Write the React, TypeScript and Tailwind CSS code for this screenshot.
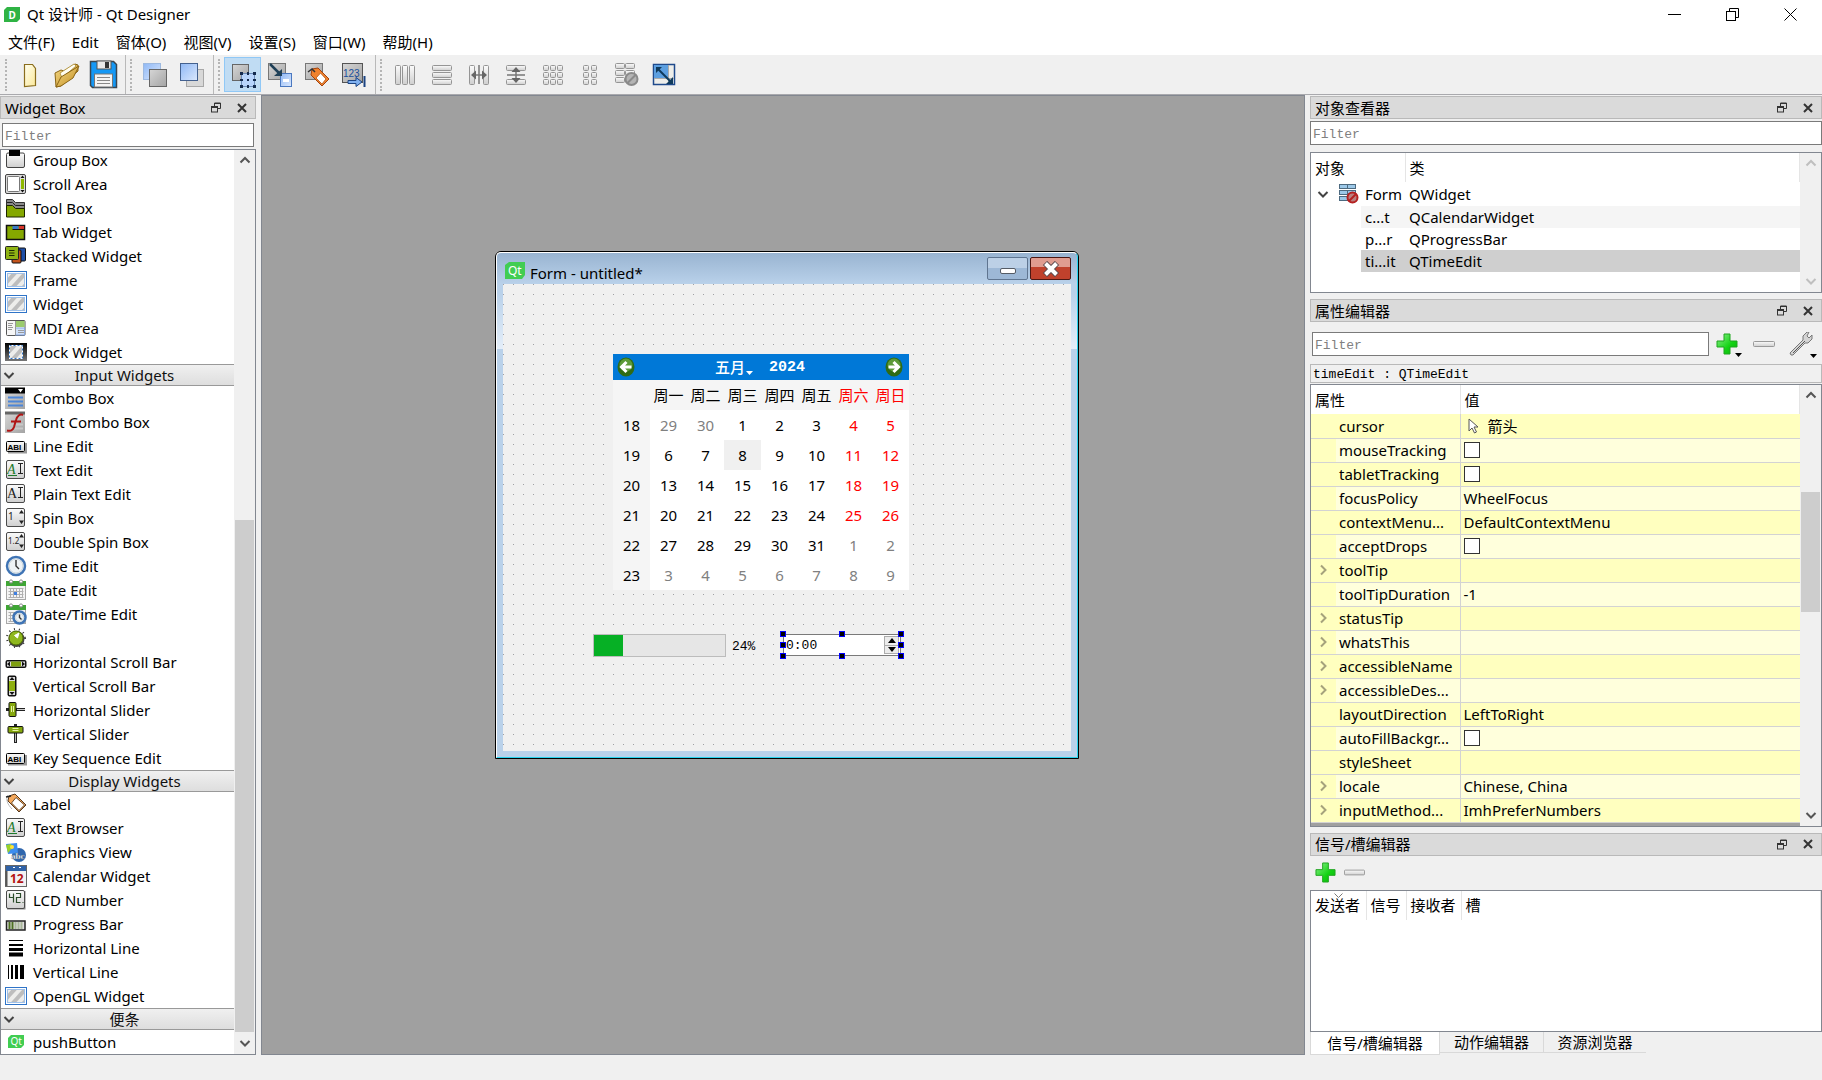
import type { ReactNode } from 'react';
import clsx from 'clsx';

const MONO = "font-['Liberation_Mono','Noto_Sans_CJK_SC',monospace] text-[13px]";

const menus = ['文件(F)', 'Edit', '窗体(O)', '视图(V)', '设置(S)', '窗口(W)', '帮助(H)'];

function Svg({ size = 22, children }: { size?: number; children: ReactNode }) {
  return (
    <svg width={size} height={size} viewBox={`0 0 ${size} ${size}`} className="shrink-0" aria-hidden="true">
      {children}
    </svg>
  );
}

/* shared gradients, referenced by id from every icon */
function Defs() {
  return (
    <svg width="0" height="0" className="absolute" aria-hidden="true">
      <defs>
        <linearGradient id="grey" x1="0" y1="0" x2="1" y2="1">
          <stop offset="0" stopColor="#d6d6d6" />
          <stop offset="1" stopColor="#a4a4a4" />
        </linearGradient>
        <linearGradient id="light" x1="0" y1="0" x2="0" y2="1">
          <stop offset="0" stopColor="#fbfbfb" />
          <stop offset="1" stopColor="#cfcfcf" />
        </linearGradient>
        <linearGradient id="blue" x1="0" y1="0" x2="1" y2="1">
          <stop offset="0" stopColor="#8fb8f5" />
          <stop offset="1" stopColor="#dbe8fd" />
        </linearGradient>
        <linearGradient id="green" x1="0" y1="0" x2="1" y2="1">
          <stop offset="0" stopColor="#8ef08e" />
          <stop offset="0.6" stopColor="#13d313" />
          <stop offset="1" stopColor="#0fae0f" />
        </linearGradient>
        <linearGradient id="paper" x1="0" y1="0" x2="1" y2="1">
          <stop offset="0" stopColor="#fffef0" />
          <stop offset="1" stopColor="#fbe99a" />
        </linearGradient>
        <linearGradient id="folder" x1="0" y1="0" x2="1" y2="1">
          <stop offset="0" stopColor="#f7dd8a" />
          <stop offset="1" stopColor="#c08a1c" />
        </linearGradient>
        <linearGradient id="dark" x1="0" y1="0" x2="0" y2="1">
          <stop offset="0" stopColor="#000" />
          <stop offset="1" stopColor="#777" />
        </linearGradient>
        <pattern id="stripes" width="8" height="8" patternUnits="userSpaceOnUse" patternTransform="rotate(42)">
          <rect width="8" height="8" fill="#ededeb" />
          <rect width="4" height="8" fill="#bdbdbd" />
        </pattern>
      </defs>
    </svg>
  );
}

const tile = <rect x="1.5" y="1.5" width="18" height="18" rx="1.5" fill="url(#light)" stroke="#4a4a4a" />;

const calendarBase = (
  <>
    <rect x="1.5" y="3.5" width="19" height="17" fill="#f4f4f4" stroke="#a8a8a8" />
    <rect x="1" y="2" width="20" height="5" fill="#3fa535" />
    <circle cx="6" cy="2.5" r="1.6" fill="#fff" stroke="#8a8a8a" />
    <circle cx="16" cy="2.5" r="1.6" fill="#fff" stroke="#8a8a8a" />
    <path d="M3.5 9.5h15M3.5 12.5h15M3.5 15.5h15M3.5 18.5h15M5.5 9v10M8.5 9v10M11.5 9v10M14.5 9v10M17.5 9v10" stroke="#b0b0b0" />
  </>
);

const lineEdit = (
  <>
    <path d="M3 17.5h18V8" fill="none" stroke="#999" strokeWidth="2" />
    <rect x="1.5" y="6.5" width="18" height="10" rx="1" fill="url(#light)" stroke="#000" />
    <text x="2.5" y="14.5" fontSize="8" fontWeight="bold" fontFamily="Liberation Sans" fill="#000">ABI</text>
  </>
);

const textEdit = (color: string, italic: boolean) => (
  <>
    {tile}
    <text x="2" y="15" fontSize="14" fontFamily="Liberation Serif" fontStyle={italic ? 'italic' : 'normal'} fill={color}>A</text>
    {italic && <path d="M3 16.5h9" stroke={color} />}
    <path d="M13 4.5h5M13 14.5h5M15.5 5v9" stroke="#222" />
  </>
);

const clock = (cx: number, cy: number, r: number) => (
  <>
    <circle cx={cx} cy={cy} r={r} fill="#eef3f6" stroke="#3f74b5" strokeWidth="2.5" />
    <circle cx={cx} cy={cy} r={r - 2} fill="none" stroke="#c9d4da" />
    <path d={`M${cx} ${cy - r + 3}V${cy}l${r / 3} ${r / 3}`} fill="none" stroke="#333" strokeWidth="1.4" />
  </>
);

const stripes = (
  <>
    <rect x="0.5" y="2.5" width="21" height="17" fill="#fff" stroke="#2f74c8" />
    <rect x="2.5" y="4.5" width="17" height="13" fill="url(#stripes)" stroke="#9fc0e8" />
  </>
);

const spin = (label: string) => (
  <>
    {tile}
    <text x="3" y="13" fontSize={label.length > 1 ? 8 : 10} fontFamily="Noto Sans" fill="#222">{label}</text>
    <path d="M16.5 3l2.500 3.500h-5zM16.500 17l2.500-3.500h-5z" fill="#222" />
  </>
);

const tag = (
  <>
    <path d="M3 2c-3 4 0 10 4 14" fill="none" stroke="#bbb" />
    <path d="M4 3l6-2 11 11-7 7L3 8z" fill="#f6a95c" stroke="#5a3a1c" />
    <path d="M11 4.500l8.500 7.500-5.500 5.500L6.500 10z" fill="#fff" stroke="#6b4a2a" />
    <path d="M1 4l5-1" stroke="#222" strokeWidth="1.5" />
  </>
);

const qt = (
  <>
    <path d="M6 4h13v10l-3 3H3V7z" fill="#41cd52" />
    <text x="5.5" y="14" fontSize="10" fontFamily="Noto Sans" fill="#fff">Qt</text>
  </>
);

const widgetIcons: Record<string, ReactNode> = {
  'Group Box': (
    <>
      <rect x="1.5" y="4" width="18" height="14.5" rx="1.5" fill="url(#light)" stroke="#444" />
      <rect x="4" y="1" width="11" height="6" fill="#000" />
    </>
  ),
  'Scroll Area': (
    <>
      <rect x="0.5" y="1.5" width="20" height="19" rx="1.5" fill="#ddd" stroke="#444" />
      <rect x="2.5" y="3.5" width="12" height="15" rx="1" fill="#fff" stroke="#777" />
      <path d="M17.5 2.500l2 2.500h-4zM17.500 19.500l2-2.500h-4z" fill="#111" />
      <rect x="16" y="6" width="3" height="10" fill="#8fb800" />
    </>
  ),
  'Tool Box': (
    <>
      <path d="M1.5 2.500h6l3 3h9v14h-18z" fill="#8a8a8a" stroke="#333" />
      <path d="M2 5.500h5.500l3 3h9" fill="none" stroke="#222" />
      <path d="M1.5 8.500h6l3 3h9v8.500h-18z" fill="#85a800" stroke="#1d2600" />
    </>
  ),
  'Tab Widget': (
    <>
      <rect x="1.5" y="4.5" width="18" height="14" fill="#85a800" stroke="#111" strokeWidth="1.5" />
      <rect x="7.5" y="5" width="6" height="3" fill="#3a78c8" />
      <rect x="14" y="5" width="5" height="3" fill="#d8352a" />
      <path d="M7.5 8.500h12" stroke="#111" />
    </>
  ),
  'Stacked Widget': (
    <>
      <rect x="10" y="3" width="10.5" height="13" rx="1" fill="#1f4fa8" stroke="#111" />
      <rect x="7" y="5" width="9" height="13" rx="1" fill="#c4541c" stroke="#111" />
      <rect x="0.5" y="1.5" width="13" height="13" rx="1" fill="#8fb314" stroke="#222" />
      <path d="M4 5.500h5.500M4 8h5.500M4 10.500h5.500" stroke="#1d2b00" />
    </>
  ),
  Frame: stripes,
  Widget: stripes,
  'MDI Area': (
    <>
      <rect x="1.5" y="3.5" width="18.5" height="15" rx="1" fill="#f6f6f6" stroke="#555" />
      <rect x="10.5" y="4" width="9" height="6" fill="#9bcb6d" />
      <rect x="10.5" y="11" width="9" height="7" fill="#cfe0fa" stroke="#8aa9e0" />
      <path d="M10.5 4v14M3 6.500h5M3 8.500h4M3 10.500h5M3 12.500h4M13 13.500h6M13 15.500h6" stroke="#999" />
    </>
  ),
  'Dock Widget': (
    <>
      <rect x="0" y="2" width="22" height="18" fill="url(#dark)" />
      <rect x="4.5" y="4.5" width="13" height="13" fill="url(#stripes)" stroke="#fff" />
      <rect x="4.5" y="4.5" width="13" height="13" fill="none" stroke="#2f74c8" strokeDasharray="2 2" />
    </>
  ),
  'Combo Box': (
    <>
      <rect x="0" y="1" width="20" height="21" fill="url(#grey)" />
      <rect x="0" y="0.5" width="20" height="6" fill="#000" />
      <path d="M13 2h5l-2.500 3.500z" fill="#fff" />
      <path d="M3 10.500h15M3 14.500h15M3 18.500h15" stroke="#4c86d8" strokeWidth="2" />
    </>
  ),
  'Font Combo Box': (
    <>
      <rect x="0" y="1" width="20" height="21" fill="url(#grey)" />
      <rect x="0" y="0.5" width="20" height="3" fill="#666" />
      <path d="M5 13.500h13M5 17.500h13" stroke="#c8c8c8" strokeWidth="2" />
      <path d="M18 4c-3-1.500-6 1-7 5l-2 7c-1 3-3 4.500-7 3.500M6 10.500h10" fill="none" stroke="#b01515" strokeWidth="2" />
    </>
  ),
  'Line Edit': lineEdit,
  'Text Edit': textEdit('#1c7a2c', true),
  'Plain Text Edit': textEdit('#222', false),
  'Spin Box': spin('1'),
  'Double Spin Box': spin('1.2'),
  'Time Edit': clock(11, 11, 9),
  'Date Edit': (
    <>
      {calendarBase}
      <rect x="9" y="13" width="3" height="3" fill="#3f7fe0" />
    </>
  ),
  'Date/Time Edit': (
    <>
      {calendarBase}
      {clock(14.5, 14.5, 6)}
    </>
  ),
  Dial: (
    <>
      <circle cx="11" cy="11" r="9" fill="none" stroke="#333" strokeWidth="2" strokeDasharray="1 4" />
      <circle cx="11.5" cy="12" r="8" fill="#444" />
      <circle cx="11" cy="11" r="7" fill="#8fb81e" stroke="#4f6b00" />
      <path d="M14 6l-1.500 5-3-2.500z" fill="#fff" stroke="#fff" />
    </>
  ),
  'Horizontal Scroll Bar': (
    <>
      <rect x="0.5" y="9" width="21" height="8" rx="2" fill="#111" />
      <rect x="2" y="10.5" width="18" height="5" fill="#ddd" />
      <rect x="6" y="10.5" width="10" height="5" fill="#7f9f10" />
      <path d="M2 13l3-2.500v5zM20 13l-3-2.500v5z" fill="#111" />
    </>
  ),
  'Vertical Scroll Bar': (
    <>
      <rect x="2.5" y="0.5" width="9" height="21" rx="2" fill="#111" />
      <rect x="4" y="2" width="6" height="18" fill="#ddd" />
      <rect x="4" y="6" width="6" height="10" fill="#8fb010" />
      <path d="M7 2l2.500 3h-5zM7 20l2.500-3h-5z" fill="#111" />
    </>
  ),
  'Horizontal Slider': (
    <>
      <path d="M1 10.500h19" stroke="#222" strokeWidth="3" />
      <path d="M12 10.500h8" stroke="#ccc" />
      <rect x="4" y="3.5" width="7" height="14" rx="1" fill="#86a80e" stroke="#111" />
      <path d="M6.500 7v6M8.500 7v6" stroke="#e7f3a8" />
    </>
  ),
  'Vertical Slider': (
    <>
      <path d="M10.500 1v19" stroke="#222" strokeWidth="3" />
      <path d="M10.500 10v9" stroke="#bbb" />
      <rect x="3" y="3.5" width="15" height="6.5" rx="1" fill="#86a80e" stroke="#111" />
      <path d="M7.500 5.500h6M7.500 7.500h6" stroke="#e7f3a8" />
    </>
  ),
  'Key Sequence Edit': lineEdit,
  Label: tag,
  'Text Browser': textEdit('#1c7a2c', true),
  'Graphics View': (
    <>
      <circle cx="14" cy="14" r="7" fill="#2f66ad" />
      <path d="M1 3l11-1 1 10-10 1z" fill="#3c8df0" />
      <path d="M1 4l5-1 1 4-4 5z" fill="#9ad227" />
      <circle cx="7" cy="6" r="2" fill="#ffe23a" />
      <text x="6" y="18" fontSize="9" fontWeight="bold" fontFamily="Liberation Serif" fill="#fff" stroke="#678" strokeWidth="0.3">abc</text>
    </>
  ),
  'Calendar Widget': (
    <>
      <rect x="0.5" y="0.5" width="21" height="21" fill="#f3f3f3" stroke="#666" />
      <rect x="1" y="1" width="20" height="5" fill="#2f62a8" />
      <path d="M8 2.500h2M14 2.500h2" stroke="#fff" />
      <path d="M1.500 6v15" stroke="#555" strokeWidth="2" />
      <text x="5" y="17.5" fontSize="12" fontWeight="bold" fontFamily="Noto Sans" fill="#b31212">12</text>
    </>
  ),
  'LCD Number': (
    <>
      <rect x="2" y="2" width="18.5" height="18.5" fill="#888" />
      {tile}
      <path d="M4.500 4.500v4h4M8.500 4.500v9M11 4.500h4.500v4H11.500v5h4M17.500 13.500h1" fill="none" stroke="#2b4d2b" strokeWidth="1.2" />
    </>
  ),
  'Progress Bar': (
    <>
      <rect x="1.5" y="8" width="18.5" height="9" fill="#ddd" stroke="#222" strokeWidth="1.5" />
      <path d="M4.500 9v7M7.500 9v7" stroke="#4d7020" strokeWidth="2" />
      <path d="M10.500 9v7M13.500 9v7M16.500 9v7" stroke="#aab89a" strokeWidth="2" />
    </>
  ),
  'Horizontal Line': (
    <>
      <path d="M4 3.500h14" stroke="#000" />
      <path d="M4 8h14" stroke="#000" strokeWidth="2" />
      <path d="M4 12.500h14" stroke="#000" strokeWidth="3" />
      <path d="M4 17.500h14" stroke="#000" strokeWidth="4" />
    </>
  ),
  'Vertical Line': (
    <>
      <path d="M3.500 4v14" stroke="#000" />
      <path d="M7 4v14" stroke="#000" strokeWidth="2" />
      <path d="M11.500 4v14" stroke="#000" strokeWidth="3" />
      <path d="M17 4v14" stroke="#000" strokeWidth="4" />
    </>
  ),
  'OpenGL Widget': stripes,
  pushButton: qt,
};

const widgetGroups: { title?: string; items: string[] }[] = [
  {
    items: ['Group Box', 'Scroll Area', 'Tool Box', 'Tab Widget', 'Stacked Widget', 'Frame', 'Widget', 'MDI Area', 'Dock Widget'],
  },
  {
    title: 'Input Widgets',
    items: [
      'Combo Box', 'Font Combo Box', 'Line Edit', 'Text Edit', 'Plain Text Edit', 'Spin Box', 'Double Spin Box', 'Time Edit',
      'Date Edit', 'Date/Time Edit', 'Dial', 'Horizontal Scroll Bar', 'Vertical Scroll Bar', 'Horizontal Slider',
      'Vertical Slider', 'Key Sequence Edit',
    ],
  },
  {
    title: 'Display Widgets',
    items: [
      'Label', 'Text Browser', 'Graphics View', 'Calendar Widget', 'LCD Number', 'Progress Bar', 'Horizontal Line',
      'Vertical Line', 'OpenGL Widget',
    ],
  },
  { title: '便条', items: ['pushButton'] },
];

const bar = { fill: 'url(#light)', stroke: '#959595', rx: 1 };

const toolGroups: { label: string; icon: ReactNode; active?: boolean }[][] = [
  [
    {
      label: 'New',
      icon: <path d="M9.500 4.500h8l3 4v17l-11 1z" fill="url(#paper)" stroke="#8a6d1c" strokeWidth="1.2" />,
    },
    {
      label: 'Open',
      icon: (
        <>
          <path d="M3 13l6-3 3 1 11-7 3 1v6L9 26l-5 1z" fill="url(#folder)" stroke="#8a6414" />
          <path d="M8 13l14-9 2 2-14 12z" fill="#fffdf2" stroke="#b79a4a" />
          <path d="M4 27l5-10 18-11-6 12-12 8z" fill="url(#folder)" stroke="#8a6414" />
        </>
      ),
    },
    {
      label: 'Save',
      icon: (
        <>
          <path d="M1.500 1.500h23l3 3v23H3.500l-2-2z" fill="#1598f5" stroke="#3a4650" strokeWidth="1.5" />
          <rect x="8" y="1" width="14" height="8" fill="#e9e9e9" stroke="#555" />
          <rect x="16" y="2" width="4" height="6" fill="#333" />
          <rect x="5.5" y="14" width="18" height="13" fill="#f4f4f4" stroke="#777" />
          <path d="M8 17.500h13M8 20.500h13M8 23.500h13" stroke="#888" />
        </>
      ),
    },
  ],
  [
    {
      label: 'Send to Back',
      icon: (
        <>
          <rect x="3.5" y="3.5" width="17" height="16" fill="url(#blue)" stroke="#9db9e0" />
          <rect x="9.5" y="9.5" width="17" height="17" fill="url(#grey)" stroke="#666" />
        </>
      ),
    },
    {
      label: 'Bring to Front',
      icon: (
        <>
          <rect x="9.5" y="9.5" width="17" height="17" fill="#d8d8d8" stroke="#a8a8a8" />
          <rect x="3.5" y="3.5" width="17" height="17" fill="url(#blue)" stroke="#44618f" />
        </>
      ),
    },
  ],
  [
    {
      label: 'Edit Widgets',
      active: true,
      icon: (
        <>
          <rect x="4.5" y="4.5" width="16" height="16" fill="url(#grey)" stroke="#666" />
          <rect x="13.5" y="13.5" width="13" height="13" fill="#b8d4fb" stroke="#6d8cb8" />
          <path d="M12 12h3v3h-3zM19 12h2v3h-2zM25 12h3v3h-3zM12 19h3v2h-3zM25 19h3v2h-3zM12 25h3v3h-3zM19 25h2v3h-2zM25 25h3v3h-3zM19 19h2v2h-2z" fill="#152a4c" />
        </>
      ),
    },
    {
      label: 'Edit Signals/Slots',
      icon: (
        <>
          <rect x="3.5" y="3.5" width="17" height="16" fill="url(#grey)" stroke="#777" />
          <rect x="15.5" y="13.5" width="11" height="13" fill="url(#blue)" stroke="#4a78c0" />
          <path d="M18 20.500h6" stroke="#fff" strokeWidth="3" />
          <path d="M5 4l9 9" stroke="#1f4057" strokeWidth="2.5" />
          <path d="M17 9v7h-8z" fill="#1f4057" />
        </>
      ),
    },
    {
      label: 'Edit Buddies',
      icon: (
        <>
          <rect x="3.5" y="3.5" width="17" height="16" fill="url(#grey)" stroke="#777" />
          <path d="M10 9l6-1 11 11-7 7-11-11z" fill="#f0822e" stroke="#a3420c" />
          <path d="M18.500 13l5.500 6-4 5-6-6z" fill="#fff" stroke="#c46a2a" />
          <path d="M6 12l4-3 3 3" fill="none" stroke="#333" strokeWidth="1.5" />
        </>
      ),
    },
    {
      label: 'Edit Tab Order',
      icon: (
        <>
          <rect x="3.5" y="3.5" width="20" height="19" fill="url(#grey)" stroke="#555" />
          <text x="4" y="17" fontSize="10" fontFamily="Liberation Sans" fill="#1a4f9c">123</text>
          <path d="M9 20.500h8v-3l6 4.500-6 4.500v-3H9z" fill="#7fb0f0" stroke="#1c4482" />
          <path d="M25.500 16v11" stroke="#1c4482" strokeWidth="2" />
        </>
      ),
    },
  ],
  [
    {
      label: 'Lay Out Horizontally',
      icon: (
        <>
          <rect x="5.5" y="5.5" width="5" height="19" {...bar} />
          <rect x="12.5" y="5.5" width="5" height="19" {...bar} />
          <rect x="19.5" y="5.5" width="5" height="19" {...bar} />
        </>
      ),
    },
    {
      label: 'Lay Out Vertically',
      icon: (
        <>
          <rect x="5.5" y="5.5" width="19" height="5" {...bar} />
          <rect x="5.5" y="12.5" width="19" height="5" {...bar} />
          <rect x="5.5" y="19.5" width="19" height="5" {...bar} />
        </>
      ),
    },
    {
      label: 'Lay Out Horizontally in Splitter',
      icon: (
        <>
          <rect x="5.5" y="5.5" width="5" height="19" {...bar} />
          <rect x="19.5" y="5.5" width="5" height="19" {...bar} />
          <path d="M15 5v19M11 15h8" stroke="#777" strokeWidth="1.5" />
          <path d="M7 15l5-4.500v9zM23 15l-5-4.500v9z" fill="#666" />
        </>
      ),
    },
    {
      label: 'Lay Out Vertically in Splitter',
      icon: (
        <>
          <rect x="5.5" y="5.5" width="19" height="5" {...bar} />
          <rect x="5.5" y="19.5" width="19" height="5" {...bar} />
          <path d="M6 15h18M15 11v8" stroke="#777" strokeWidth="1.5" />
          <path d="M15 7l4.500 5h-9zM15 23l4.500-5h-9z" fill="#666" />
        </>
      ),
    },
    {
      label: 'Lay Out in a Grid',
      icon: [5.5, 12.5, 19.5].flatMap((x) =>
        [5.5, 12.5, 19.5].map((y) => <rect key={`${x}-${y}`} x={x} y={y} width="5" height="5" {...bar} />)
      ),
    },
    {
      label: 'Lay Out in a Form Layout',
      icon: [8.5, 16.5].flatMap((x) =>
        [5.5, 12.5, 19.5].map((y) => <rect key={`${x}-${y}`} x={x} y={y} width="5" height="5" {...bar} />)
      ),
    },
    {
      label: 'Break Layout',
      icon: (
        <>
          {[3.5, 13.5].flatMap((x) =>
            [3.5, 10.5, 17.5].map((y) => <rect key={`${x}-${y}`} x={x} y={y} width="9" height="5" {...bar} />)
          )}
          <circle cx="19.5" cy="19" r="6" fill="#b4b4b4" stroke="#8a8a8a" strokeWidth="2" />
          <path d="M15.500 23l8-8" stroke="#8a8a8a" strokeWidth="2" />
        </>
      ),
    },
    {
      label: 'Adjust Size',
      icon: (
        <>
          <rect x="4.5" y="4.5" width="21" height="20" fill="#eeeeea" stroke="#1f4a8c" strokeWidth="1.5" />
          <rect x="5" y="5" width="14" height="13" fill="#5c9fe0" />
          <path d="M19.500 5v19M5 18.500h20" stroke="#aaa" />
          <path d="M9 9l13 13" stroke="#0f3a5c" strokeWidth="2" />
          <path d="M7 7h6l-6 6zM24 24h-7l7-7z" fill="#0f3a5c" />
        </>
      ),
    },
  ],
];

function Chevron({ dir, className }: { dir: 'up' | 'down' | 'right'; className?: string }) {
  const d = { up: 'M1.500 7.500L6 3l4.500 4.500', down: 'M1.500 4L6 8.500 10.500 4', right: 'M4 1.500L8.500 6 4 10.500' }[dir];
  return (
    <svg width="12" height="12" viewBox="0 0 12 12" className={className} aria-hidden="true">
      <path d={d} fill="none" stroke="currentColor" strokeWidth="2" />
    </svg>
  );
}

function ScrollBar({ before, thumb, after, disabled }: { before?: string; thumb?: string; after?: string; disabled?: boolean }) {
  const arrow = clsx('flex h-[22px] shrink-0 items-center justify-center', disabled ? 'text-[#bfbfbf]' : 'text-[#555]');
  return (
    <div className="flex w-[21px] shrink-0 flex-col bg-[#f0f0f0] px-px">
      <button aria-label="Scroll up" disabled={disabled} className={arrow}>
        <Chevron dir="up" />
      </button>
      <div className={before ?? 'flex-1'} />
      {thumb && <div className={clsx('bg-[#cdcdcd]', thumb)} />}
      {after && <div className={after} />}
      <button aria-label="Scroll down" disabled={disabled} className={arrow}>
        <Chevron dir="down" />
      </button>
    </div>
  );
}

function DockTitle({ title }: { title: string }) {
  return (
    <div className="flex h-[23px] shrink-0 items-center border border-[#b9b9b9] bg-[#dadada] pl-1">
      <h2 className="flex-1">{title}</h2>
      <button aria-label={`Float ${title}`} className="mr-4">
        <svg width="10" height="11" viewBox="0 0 10 11" aria-hidden="true">
          <path d="M3.500 4V1h6v5.500H7M3 1.500h7" fill="none" stroke="#333" />
          <rect x="0.5" y="4.5" width="6" height="5.5" fill="#dadada" stroke="#333" />
          <path d="M0 5h7" stroke="#333" strokeWidth="2" />
        </svg>
      </button>
      <button aria-label={`Close ${title}`} className="mr-2 text-[#333]">
        <svg width="10" height="10" viewBox="0 0 10 10" aria-hidden="true">
          <path d="M1 1l8 8M9 1L1 9" stroke="currentColor" strokeWidth="2" />
        </svg>
      </button>
    </div>
  );
}

function FilterInput({ label, className }: { label: string; className?: string }) {
  return (
    <input
      type="text"
      aria-label={label}
      placeholder="Filter"
      className={clsx(MONO, 'h-6 border border-[#7a7a7a] bg-white px-0.5 pt-0.5 placeholder:text-[#808080]', className)}
    />
  );
}

function PlusIcon({ size }: { size: number }) {
  return (
    <svg width={size} height={size} viewBox="0 0 22 22" aria-hidden="true">
      <path d="M8 1h6v7h7v6h-7v7H8v-7H1V8h7z" fill="url(#green)" stroke="#1fa51f" />
    </svg>
  );
}

function MinusIcon({ size }: { size: number }) {
  return (
    <svg width={size} height={size} viewBox="0 0 22 22" aria-hidden="true">
      <rect x="0.5" y="8.5" width="21" height="5" rx="1" fill="url(#light)" stroke="#999" />
    </svg>
  );
}

function WidgetBox() {
  return (
    <aside className="flex w-64 shrink-0 flex-col pt-px">
      <DockTitle title="Widget Box" />
      <FilterInput label="Filter widgets" className="mx-0.5 mt-1" />
      <div className="mt-0.5 flex min-h-0 flex-1 border border-[#828790] bg-white">
        <div className="min-w-0 flex-1 overflow-hidden">
          <div className="-mt-0.5">
            {widgetGroups.map(({ title, items }) => (
              <section key={title ?? 'Containers'}>
                {title && (
                  <button className="flex h-[22px] w-full items-center border-y border-[#999] bg-linear-to-b from-[#f0f0f0] to-[#dedede] pl-0.5 text-[#444]">
                    <Chevron dir="down" />
                    <span className="flex-1 text-center text-[#111]">{title}</span>
                  </button>
                )}
                <ul>
                  {items.map((item) => (
                    <li key={item} className="flex h-6 items-center gap-1.5 pl-1">
                      <Svg>{widgetIcons[item]}</Svg>
                      <span className="whitespace-nowrap">{item}</span>
                    </li>
                  ))}
                </ul>
              </section>
            ))}
          </div>
        </div>
        <ScrollBar before="flex-[348]" thumb="flex-[512]" />
      </div>
    </aside>
  );
}

const weekdays = ['周一', '周二', '周三', '周四', '周五', '周六', '周日'];
const weeks = [
  { no: 18, days: [29, 30, 1, 2, 3, 4, 5] },
  { no: 19, days: [6, 7, 8, 9, 10, 11, 12] },
  { no: 20, days: [13, 14, 15, 16, 17, 18, 19] },
  { no: 21, days: [20, 21, 22, 23, 24, 25, 26] },
  { no: 22, days: [27, 28, 29, 30, 31, 1, 2] },
  { no: 23, days: [3, 4, 5, 6, 7, 8, 9] },
];

function dayColor(week: number, day: number, column: number) {
  if ((week === 0 && day > 20) || (week > 3 && day < 20)) return 'text-[#808080]';
  return column > 4 ? 'text-[#ff0000]' : '';
}

function NavArrow({ flip }: { flip?: boolean }) {
  return (
    <svg width="18" height="20" viewBox="0 0 18 20" className={clsx(flip && '-scale-x-100')} aria-hidden="true">
      <ellipse cx="9" cy="10" rx="8.5" ry="9.5" fill="#2f6b14" />
      <ellipse cx="9" cy="8" rx="6.5" ry="6.5" fill="#5c9a38" />
      <path d="M9.500 5L4.500 10l5 5M5 10h9.500" fill="none" stroke="#fff" strokeWidth="3" />
    </svg>
  );
}

function Calendar() {
  return (
    <div className="absolute top-[70px] left-[110px] w-[296px] bg-white">
      <div className="flex h-[26px] items-center bg-[#0078d7] pr-1.5 pl-1 text-white">
        <button aria-label="Previous month">
          <NavArrow />
        </button>
        <div className="flex flex-1 items-center justify-center gap-4">
          <button className="flex items-end font-medium">
            五月
            <svg width="8" height="8" viewBox="0 0 8 8" aria-hidden="true">
              <path d="M1 2h7L4.500 6z" fill="#fff" />
            </svg>
          </button>
          <button className="pt-0.5 font-['Liberation_Mono',monospace] text-[15px] leading-6 font-bold">2024</button>
        </div>
        <button aria-label="Next month">
          <NavArrow flip />
        </button>
      </div>
      <table className="w-full table-fixed border-collapse text-center">
        <thead className="bg-[#f5f5f5]">
          <tr className="h-[30px]">
            <td />
            {weekdays.map((day, i) => (
              <th key={day} scope="col" className={clsx('p-0 font-normal whitespace-nowrap', i > 4 && 'text-[#ff0000]')}>
                {day}
              </th>
            ))}
          </tr>
        </thead>
        <tbody>
          {weeks.map(({ no, days }, w) => (
            <tr key={no} className="h-[30px]">
              <th scope="row" className="bg-[#f5f5f5] p-0 font-normal">{no}</th>
              {days.map((day, i) => (
                <td key={i} className={clsx('p-0', dayColor(w, day, i), w === 1 && day === 8 && 'bg-[#f0f0f0]')}>
                  {day}
                </td>
              ))}
            </tr>
          ))}
        </tbody>
      </table>
    </div>
  );
}

const handles = [
  '-top-1 -left-1', '-top-1 left-1/2 -ml-[3px]', '-top-1 -right-1',
  'top-1/2 -left-1 -mt-[3px]', 'top-1/2 -right-1 -mt-[3px]',
  '-bottom-1 -left-1', '-bottom-1 left-1/2 -ml-[3px]', '-bottom-1 -right-1',
];

function TimeEdit() {
  return (
    <div className="absolute top-[350px] left-[280px] flex h-[22px] w-[118px] border border-[#7a7a7a] bg-white">
      <input type="text" aria-label="timeEdit" defaultValue="0:00" className={clsx(MONO, 'min-w-0 flex-1 pt-0.5 pl-0.5')} />
      <div className="m-px flex w-[15px] flex-col">
        <button aria-label="Step up" className="flex flex-1 items-center justify-center border border-[#acacac] bg-[#ececec]">
          <svg width="8" height="5" viewBox="0 0 8 5" aria-hidden="true"><path d="M4 0l4 5H0z" /></svg>
        </button>
        <button aria-label="Step down" className="flex flex-1 items-center justify-center border border-t-0 border-[#acacac] bg-[#ececec]">
          <svg width="8" height="5" viewBox="0 0 8 5" aria-hidden="true"><path d="M4 5l4-5H0z" /></svg>
        </button>
      </div>
      {handles.map((place) => (
        <span key={place} className={clsx('absolute size-1.5 border border-[#0000ff] bg-black', place)} />
      ))}
    </div>
  );
}

function FormWindow() {
  return (
    <div className="absolute top-[155px] left-[233px] rounded-t-md border border-black">
      <div className="rounded-t-[5px] border border-t-white border-r-[#27d3ee] border-b-[#27d3ee] border-l-white bg-[linear-gradient(#99b4d1,#b9d1ea_31px,#b9d1ea_40px,#e4eef9_96px,#b9d1ea_96px)] px-1.5 pb-1.5">
        <div className="flex h-[31px] items-center">
          <svg width="23" height="22" viewBox="0 0 23 22" className="mt-1" aria-hidden="true">
            <path d="M6 2h16v13l-3 4H2V5z" fill="#41cd52" />
            <text x="5" y="15" fontSize="12" fontFamily="Noto Sans" fill="#fff">Qt</text>
          </svg>
          <span className="mt-2 ml-1 flex-1 text-black">Form - untitled*</span>
          <button aria-label="Minimize form" className="mr-0.5 flex h-[23px] w-[41px] items-center justify-center rounded-xs border border-[#5f7590] bg-linear-to-b from-[#bcd0e6] from-50% to-[#9db8d6] to-50%">
            <span className="mt-1 h-1.5 w-4 rounded-xs border border-[#555c66] bg-white" />
          </button>
          <button aria-label="Close form" className="flex h-[23px] w-[41px] items-center justify-center rounded-xs border border-[#4d1712] bg-linear-to-b from-[#e09c90] from-45% to-[#c0412c] to-45%">
            <svg width="18" height="16" viewBox="0 0 18 16" aria-hidden="true">
              <path d="M3 2l12 12M15 2L3 14" stroke="#5a4a4e" strokeWidth="6" />
              <path d="M3.500 2.500l11 11M14.500 2.500l-11 11" stroke="#fff" strokeWidth="4" />
            </svg>
          </button>
        </div>
        <div className="relative h-[467px] w-[568px] bg-[#a0a0a4] bg-[linear-gradient(90deg,transparent_1px,#f0f0f0_1px),linear-gradient(transparent_1px,#f0f0f0_1px)] bg-[size:10px_10px]">
          <Calendar />
          <div className="absolute top-[350px] left-[90px] flex h-[23px] items-center gap-1.5">
            <div role="progressbar" aria-label="progressBar" aria-valuenow={24} className="h-full w-[133px] border border-[#bcbcbc] bg-[#e6e6e6]">
              <div className="h-full bg-[#06b025]" style={{ width: '22%' }} />
            </div>
            <span className={clsx(MONO, 'pt-0.5')}>24%</span>
          </div>
          <TimeEdit />
        </div>
      </div>
    </div>
  );
}

function ObjectInspector() {
  const rows = [
    { name: 'c...t', cls: 'QCalendarWidget', bg: 'bg-[#f5f5f5]' },
    { name: 'p...r', cls: 'QProgressBar', bg: '' },
    { name: 'ti...it', cls: 'QTimeEdit', bg: 'bg-[#cfcfcf]' },
  ];
  return (
    <section className="flex flex-col">
      <DockTitle title="对象查看器" />
      <FilterInput label="Filter objects" className="mt-0.5" />
      <div className="mt-[7px] flex border border-[#828790] bg-white">
        <table className="mb-5 flex-1 table-fixed border-collapse">
          <thead>
            <tr className="h-[29px] text-left">
              <th scope="col" colSpan={2} className="w-[94px] border-r border-[#e5e5e5] p-0 pl-1 font-normal">对象</th>
              <th scope="col" className="border-r border-[#e5e5e5] p-0 pl-1 font-normal">类</th>
            </tr>
          </thead>
          <tbody>
            <tr className="h-6">
              <td colSpan={2} className="p-0">
                <div className="flex items-center pl-1.5">
                  <Chevron dir="down" className="text-[#444]" />
                  <svg width="22" height="22" viewBox="0 0 22 22" className="ml-2" aria-hidden="true">
                    {[2, 8, 14].flatMap((y) =>
                      [2, 10].map((x) => <rect key={`${x}-${y}`} x={x + 0.5} y={y - 0.5} width="8" height="4" fill="#9cc8e8" stroke="#4d6a80" />)
                    )}
                    <circle cx="15.5" cy="14.5" r="5" fill="#b98080" stroke="#b52020" strokeWidth="2" />
                    <path d="M12 18l7-7" stroke="#b52020" strokeWidth="2" />
                  </svg>
                  <span className="ml-1.5">Form</span>
                </div>
              </td>
              <td className="p-0 pl-1">QWidget</td>
            </tr>
            {rows.map(({ name, cls, bg }) => (
              <tr key={cls} className="h-[22px] leading-[22px]">
                <td className="w-[50px] p-0" />
                <td className={clsx('w-11 p-0 pl-1', bg)}>{name}</td>
                <td className={clsx('p-0 pl-1', bg)}>{cls}</td>
              </tr>
            ))}
          </tbody>
        </table>
        <ScrollBar disabled />
      </div>
    </section>
  );
}

type Property = { name: string; value?: ReactNode; check?: boolean; expand?: boolean };

const properties: Property[] = [
  {
    name: 'cursor',
    value: (
      <span className="flex items-center gap-2 pl-1">
        <svg width="12" height="16" viewBox="0 0 12 16" aria-hidden="true">
          <path d="M1 1v12l3-3 2.500 5 2-1-2.500-5h4z" fill="#fff" stroke="#555" />
        </svg>
        箭头
      </span>
    ),
  },
  { name: 'mouseTracking', check: true },
  { name: 'tabletTracking', check: true },
  { name: 'focusPolicy', value: 'WheelFocus' },
  { name: 'contextMenu...', value: 'DefaultContextMenu' },
  { name: 'acceptDrops', check: true },
  { name: 'toolTip', expand: true },
  { name: 'toolTipDuration', value: '-1' },
  { name: 'statusTip', expand: true },
  { name: 'whatsThis', expand: true },
  { name: 'accessibleName', expand: true },
  { name: 'accessibleDes...', expand: true },
  { name: 'layoutDirection', value: 'LeftToRight' },
  { name: 'autoFillBackgr...', check: true },
  { name: 'styleSheet' },
  { name: 'locale', value: 'Chinese, China', expand: true },
  { name: 'inputMethod...', value: 'ImhPreferNumbers', expand: true },
];

function MenuArrow() {
  return (
    <svg width="7" height="4" viewBox="0 0 7 4" className="absolute -right-1 -bottom-0.5" aria-hidden="true">
      <path d="M0 0h7L3.500 4z" />
    </svg>
  );
}

function PropertyEditor() {
  return (
    <section className="mt-1.5 flex flex-col">
      <DockTitle title="属性编辑器" />
      <div className="flex h-[42px] items-center pt-0.5 pr-[9px] pl-0.5">
        <FilterInput label="Filter properties" className="flex-1" />
        <button aria-label="Add dynamic property" className="relative ml-[7px]">
          <PlusIcon size={22} />
          <MenuArrow />
        </button>
        <button aria-label="Remove dynamic property" className="ml-[15px]">
          <MinusIcon size={22} />
        </button>
        <button aria-label="Configure property editor" className="relative ml-3.5">
          <svg width="24" height="24" viewBox="0 0 24 24" aria-hidden="true">
            <path d="M2 23l-1-2L14 8l0-4 4-4 2 0-2 4 2 2 3-3 0 4-4 4-3 0L4 23z" fill="#d4d4d4" stroke="#777" />
            <path d="M4 21L16 9" stroke="#555" />
          </svg>
          <MenuArrow />
        </button>
      </div>
      <div className={clsx(MONO, 'h-[19px] border border-[#b9b9b9] pl-0.5 leading-[19px]')}>timeEdit : QTimeEdit</div>
      <div className="mt-px flex border border-[#828790] bg-[#a0a0a0]">
        <table className="mb-[3px] flex-1 table-fixed border-collapse">
          <thead className="bg-white">
            <tr className="h-[29px] text-left">
              <th scope="col" colSpan={2} className="w-[149px] border-r border-[#e5e5e5] p-0 pl-1 font-normal">属性</th>
              <th scope="col" className="border-r border-[#e5e5e5] p-0 pl-1 font-normal">值</th>
            </tr>
          </thead>
          <tbody>
            {properties.map(({ name, value, check, expand }, i) => (
              <tr key={name} className={clsx('h-6 border-b border-[#d3d3d3] leading-[22px]', i % 2 ? 'bg-[#ffffdc]' : 'bg-[#ffffbf]')}>
                <td className="w-[25px] bg-[#ffffbf] p-0">
                  {expand && <Chevron dir="right" className="ml-1.5 text-[#a5a27c]" />}
                </td>
                <td className="w-[124px] border-r border-[#d3d3d3] p-0 pl-[3px] whitespace-nowrap">{name}</td>
                <td className="p-0 pl-[3px]">
                  {check ? <input type="checkbox" aria-label={name} className="block size-4 appearance-none border border-[#333] bg-white" /> : value}
                </td>
              </tr>
            ))}
          </tbody>
        </table>
        <ScrollBar before="flex-[85]" thumb="flex-[120]" after="flex-[191]" />
      </div>
    </section>
  );
}

function SignalEditor() {
  return (
    <section className="mt-1.5 flex min-h-0 flex-1 flex-col">
      <DockTitle title="信号/槽编辑器" />
      <div className="flex h-[34px] shrink-0 items-center gap-2 pl-[5px]">
        <button aria-label="Add connection">
          <PlusIcon size={21} />
        </button>
        <button aria-label="Remove connection">
          <MinusIcon size={21} />
        </button>
      </div>
      <div className="min-h-0 flex-1 border border-[#828790] bg-white">
        <table className="w-full table-fixed border-collapse">
          <thead>
            <tr className="h-[29px] text-left">
              <th scope="col" className="relative w-[55px] border-r border-[#e5e5e5] p-0 pl-1 font-normal">
                <svg width="9" height="5" viewBox="0 0 9 5" className="absolute top-0.5 left-1/2 -ml-1" aria-hidden="true">
                  <path d="M0.500 0.500l4 4 4-4" fill="none" stroke="#777" />
                </svg>
                发送者
              </th>
              <th scope="col" className="w-10 border-r border-[#e5e5e5] p-0 pl-1 font-normal">信号</th>
              <th scope="col" className="w-[55px] border-r border-[#e5e5e5] p-0 pl-1 font-normal">接收者</th>
              <th scope="col" className="border-r border-[#e5e5e5] p-0 pl-1 font-normal">槽</th>
            </tr>
          </thead>
        </table>
      </div>
      <div role="tablist" className="flex h-[23px] shrink-0 items-start">
        <button role="tab" aria-selected="true" className="h-[23px] w-[130px] border-x border-b border-[#d9d9d9] bg-white">信号/槽编辑器</button>
        <button role="tab" aria-selected="false" className="h-[21px] w-[104px] border-r border-b border-[#d9d9d9]">动作编辑器</button>
        <button role="tab" aria-selected="false" className="h-[21px] w-[102px] border-b border-[#d9d9d9]">资源浏览器</button>
      </div>
    </section>
  );
}

const captionButton = 'flex h-7 w-[58px] items-center justify-center';

export default function App() {
  return (
    <div className="flex h-screen min-h-[720px] flex-col bg-[#f0f0f0] font-['Noto_Sans','Noto_Sans_CJK_SC',sans-serif] text-[15px] leading-5 text-black">
      <Defs />
      <header className="bg-white">
        <div className="flex h-7 items-center pr-[3px] pl-1">
          <svg width="16" height="15" viewBox="0 0 16 15" aria-hidden="true">
            <path d="M3 0h13v12l-3 3H0V3z" fill="#2fb344" />
            <text x="4.5" y="11.5" fontSize="10" fontWeight="bold" fontFamily="Noto Sans" fill="#fff">D</text>
          </svg>
          <h1 className="ml-[7px] flex-1">Qt 设计师 - Qt Designer</h1>
          <button aria-label="Minimize" className={captionButton}>
            <svg width="13" height="13" viewBox="0 0 13 13" stroke="#000" aria-hidden="true">
              <path d="M0 6.500h13" />
            </svg>
          </button>
          <button aria-label="Restore" className={captionButton}>
            <svg width="13" height="13" viewBox="0 0 13 13" fill="none" stroke="#000" aria-hidden="true">
              <path d="M3.500 3V0.500h9v9H10" />
              <rect x="0.5" y="3.5" width="9" height="9" />
            </svg>
          </button>
          <button aria-label="Close" className={captionButton}>
            <svg width="13" height="13" viewBox="0 0 13 13" stroke="#000" aria-hidden="true">
              <path d="M0.500 0.500l12 12M12.500 0.500l-12 12" />
            </svg>
          </button>
        </div>
        <nav className="flex h-[27px] items-center gap-[17px] pl-2">
          {menus.map((menu) => (
            <button key={menu} className="whitespace-nowrap">{menu}</button>
          ))}
        </nav>
      </header>

      <div className="flex h-10 shrink-0 border-b border-[#a9a9ad] pl-px">
        {toolGroups.map((group, g) => (
          <div key={g} role="toolbar" className={clsx('flex items-center pr-[3px] pl-1', g < 3 && 'border-r border-[#b9b9b9]')}>
            <span className="mr-1 h-8 border-l-2 border-dotted border-[#b5b5b5]" />
            {group.map(({ label, icon, active }) => (
              <button
                key={label}
                aria-label={label}
                className={clsx('flex h-[35px] w-[37px] items-center justify-center', active && 'border border-[#90c8f6] bg-[#c0dcf3]')}
              >
                <Svg size={30}>{icon}</Svg>
              </button>
            ))}
          </div>
        ))}
      </div>

      <div className="flex min-h-0 flex-1">
        <WidgetBox />
        <main className="relative ml-[5px] flex-1 overflow-hidden border border-[#828790] bg-[#a0a0a0]">
          <FormWindow />
        </main>
        <aside className="ml-[5px] flex w-[512px] shrink-0 flex-col pt-px">
          <ObjectInspector />
          <PropertyEditor />
          <SignalEditor />
        </aside>
      </div>

      <footer className="h-[25px] shrink-0" />
    </div>
  );
}
